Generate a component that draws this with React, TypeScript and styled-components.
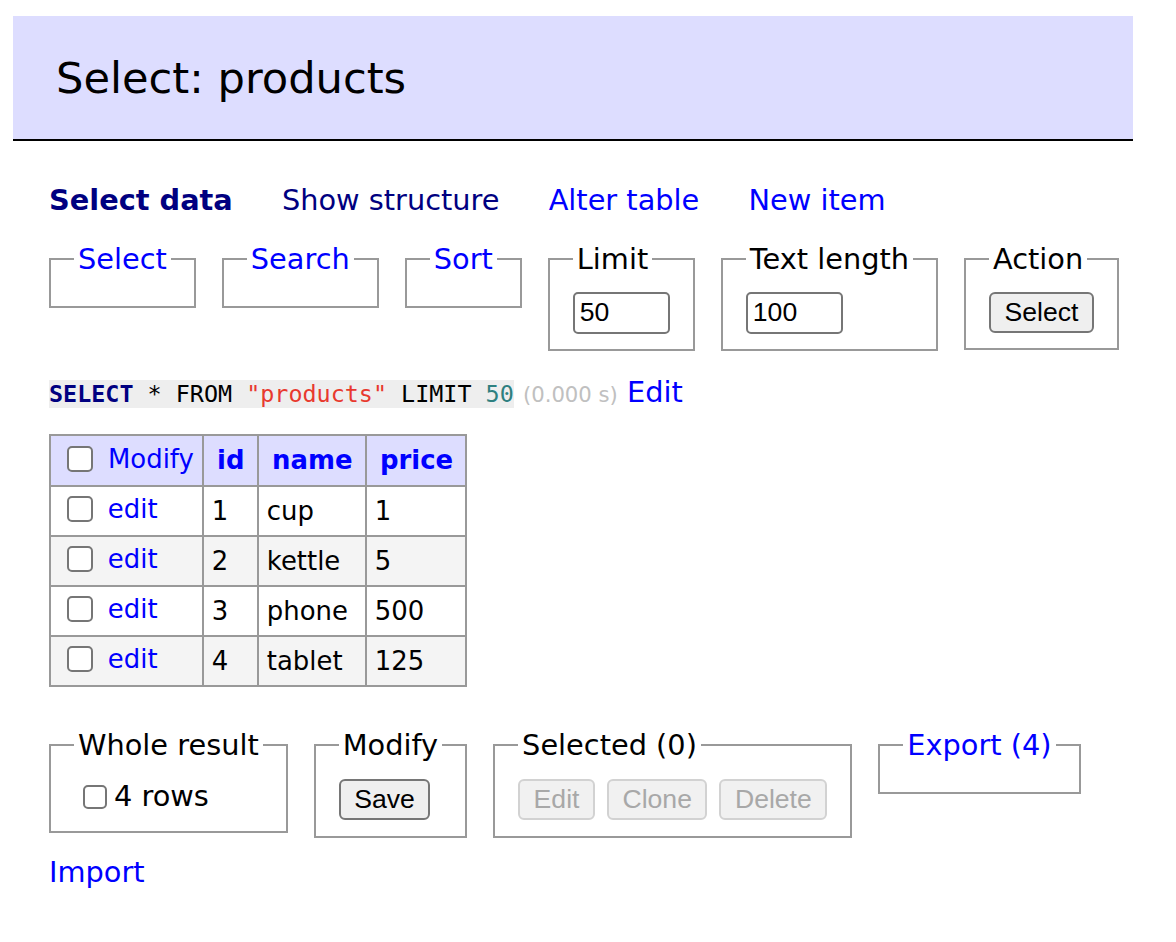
import React from 'react';
import styled, { createGlobalStyle } from 'styled-components';

const GlobalStyle = createGlobalStyle`
  body {
    margin: 0;
    background: #fff;
    color: #000;
    font-family: "DejaVu Sans", Verdana, sans-serif;
    font-size: 28.8px;
    line-height: 36px;
  }
  a {
    color: #0000ff;
    text-decoration: none;
  }
`;

const Page = styled.div`
  padding: 16px 43px 40px 13px;
`;

const Heading = styled.h2`
  margin: 0 0 41px;
  padding: 34.5px 43px;
  background: #ddf;
  border-bottom: 2px solid #000;
  font-size: 43.2px;
  line-height: 54px;
  font-weight: normal;
`;

const Content = styled.div`
  padding-left: 36px;
`;

const Links = styled.p`
  margin: 0;
  white-space: nowrap;
`;

const NavLink = styled.a<{ $active?: boolean; $visited?: boolean }>`
  margin-right: 40px;
  color: ${p => (p.$active || p.$visited ? '#000080' : '#0000ff')};
  font-weight: ${p => (p.$active ? 'bold' : 'normal')};
`;

const FieldRow = styled.div<{ $top: number }>`
  display: flex;
  align-items: flex-start;
  gap: 26px;
  margin-top: ${p => p.$top}px;
`;

const Fieldset = styled.fieldset`
  margin: 0;
  padding: 14.4px 23px;
  border: 2px solid #999;
  min-inline-size: 0;
`;

const Legend = styled.legend<{ $link?: boolean }>`
  padding: 0 4px;
  line-height: 36px;
  color: ${p => (p.$link ? '#0000ff' : '#000')};
`;

const Controls = styled.div<{ $height: number }>`
  display: flex;
  align-items: center;
  gap: 12px;
  min-height: ${p => p.$height}px;
`;

const TextInput = styled.input`
  display: block;
  box-sizing: border-box;
  width: 97px;
  height: 42px;
  margin: 0;
  padding: 0 5px;
  border: 2px solid #767676;
  border-radius: 5px;
  font-family: "Liberation Sans", Arial, sans-serif;
  font-size: 26.6px;
  color: #000;
  background: #fff;
`;

const Button = styled.button`
  box-sizing: border-box;
  height: 41px;
  margin: 0;
  padding: 0 13.5px;
  border: 2px solid #767676;
  border-radius: 6px;
  background: #efefef;
  color: #000;
  font-family: "Liberation Sans", Arial, sans-serif;
  font-size: 26.6px;

  &:disabled {
    border-color: #d2d2d2;
    background: #f1f1f1;
    color: #a8a8a8;
  }
`;

const Check = styled.input.attrs({ type: 'checkbox' })<{ $size: number }>`
  appearance: none;
  box-sizing: border-box;
  flex: none;
  width: ${p => p.$size}px;
  height: ${p => p.$size}px;
  margin: 0;
  border: 2px solid #767676;
  border-radius: 5px;
  background: #fff;
  vertical-align: middle;
`;

const SqlLine = styled.p`
  margin: 23px 0 0;
  white-space: nowrap;
`;

const Code = styled.code`
  background: #eee;
  font-family: "DejaVu Sans Mono", monospace;
  font-size: 23.4px;
`;

const Keyword = styled.span`
  color: #000080;
  font-weight: bold;
`;

const Quoted = styled.span`
  color: #e8392e;
`;

const Num = styled.span`
  color: #2e8080;
`;

const Time = styled.span`
  color: #c0c0c0;
  font-size: 21.2px;
`;

const Table = styled.table`
  margin-top: 21px;
  border-collapse: collapse;
  table-layout: fixed;
  width: 416px;
  font-size: 25.92px;
  line-height: 32px;
`;

const HeadRow = styled.tr`
  height: 51px;
  background: #ddf;
`;

const Row = styled.tr<{ $odd: boolean }>`
  height: 50px;
  background: ${p => (p.$odd ? '#f4f4f4' : '#fff')};
`;

const Th = styled.th<{ $width: number }>`
  width: ${p => p.$width}px;
  box-sizing: border-box;
  border: 2px solid #999;
  padding: 0 13px;
  text-align: center;
  color: #0000ff;
`;

const Td = styled.td`
  border: 2px solid #999;
  padding: 0 7.8px;
  text-align: left;
  vertical-align: middle;
`;

const CheckCell = styled.div<{ $head?: boolean }>`
  display: flex;
  align-items: center;
  gap: 15px;
  padding-left: ${p => (p.$head ? '3px' : '8px')};
  margin-top: ${p => (p.$head ? '-3px' : '-4px')};
  text-align: left;
`;

const ModifyLabel = styled.a`
  font-weight: normal;
`;

const RowsLabel = styled.label`
  display: flex;
  align-items: center;
  gap: 7px;
  padding-left: 9px;
  line-height: 39px;
`;

const ImportLine = styled.p`
  margin: 16px 0 0;
`;

const rows = [
  { id: 1, name: 'cup', price: 1 },
  { id: 2, name: 'kettle', price: 5 },
  { id: 3, name: 'phone', price: 500 },
  { id: 4, name: 'tablet', price: 125 },
];

export default function App() {
  return (
    <>
      <GlobalStyle />
      <Page>
        <Heading>Select: products</Heading>
        <Content>
          <Links>
            <NavLink href="#" $active>Select data</NavLink>{' '}
            <NavLink href="#" $visited>Show structure</NavLink>{' '}
            <NavLink href="#">Alter table</NavLink>{' '}
            <NavLink href="#">New item</NavLink>
          </Links>

          <FieldRow $top={23}>
            <Fieldset>
              <Legend $link>Select</Legend>
            </Fieldset>
            <Fieldset>
              <Legend $link>Search</Legend>
            </Fieldset>
            <Fieldset>
              <Legend $link>Sort</Legend>
            </Fieldset>
            <Fieldset>
              <Legend>Limit</Legend>
              <Controls $height={43}>
                <TextInput defaultValue="50" />
              </Controls>
            </Fieldset>
            <Fieldset>
              <Legend>Text length</Legend>
              <Controls $height={43}>
                <TextInput defaultValue="100" />
              </Controls>
            </Fieldset>
            <Fieldset>
              <Legend>Action</Legend>
              <Controls $height={42}>
                <Button>Select</Button>
              </Controls>
            </Fieldset>
          </FieldRow>

          <SqlLine>
            <Code>
              <Keyword>SELECT</Keyword> * FROM <Quoted>"products"</Quoted> LIMIT <Num>50</Num>
            </Code>{' '}
            <Time>(0.000 s)</Time> <a href="#">Edit</a>
          </SqlLine>

          <Table>
            <thead>
              <HeadRow>
                <Th $width={153}>
                  <CheckCell $head>
                    <Check $size={26} />
                    <ModifyLabel href="#">Modify</ModifyLabel>
                  </CheckCell>
                </Th>
                <Th $width={55}>id</Th>
                <Th $width={108}>name</Th>
                <Th $width={100}>price</Th>
              </HeadRow>
            </thead>
            <tbody>
              {rows.map((r, i) => (
                <Row key={r.id} $odd={i % 2 === 1}>
                  <Td>
                    <CheckCell>
                      <Check $size={26} />
                      <a href="#">edit</a>
                    </CheckCell>
                  </Td>
                  <Td>{r.id}</Td>
                  <Td>{r.name}</Td>
                  <Td>{r.price}</Td>
                </Row>
              ))}
            </tbody>
          </Table>

          <FieldRow $top={40}>
            <Fieldset>
              <Legend>Whole result</Legend>
              <RowsLabel>
                <Check $size={24} />4 rows
              </RowsLabel>
            </Fieldset>
            <Fieldset>
              <Legend>Modify</Legend>
              <Controls $height={44}>
                <Button>Save</Button>
              </Controls>
            </Fieldset>
            <Fieldset>
              <Legend>Selected (0)</Legend>
              <Controls $height={44}>
                <Button disabled>Edit</Button>
                <Button disabled>Clone</Button>
                <Button disabled>Delete</Button>
              </Controls>
            </Fieldset>
            <Fieldset>
              <Legend $link>Export (4)</Legend>
            </Fieldset>
          </FieldRow>

          <ImportLine>
            <a href="#">Import</a>
          </ImportLine>
        </Content>
      </Page>
    </>
  );
}
